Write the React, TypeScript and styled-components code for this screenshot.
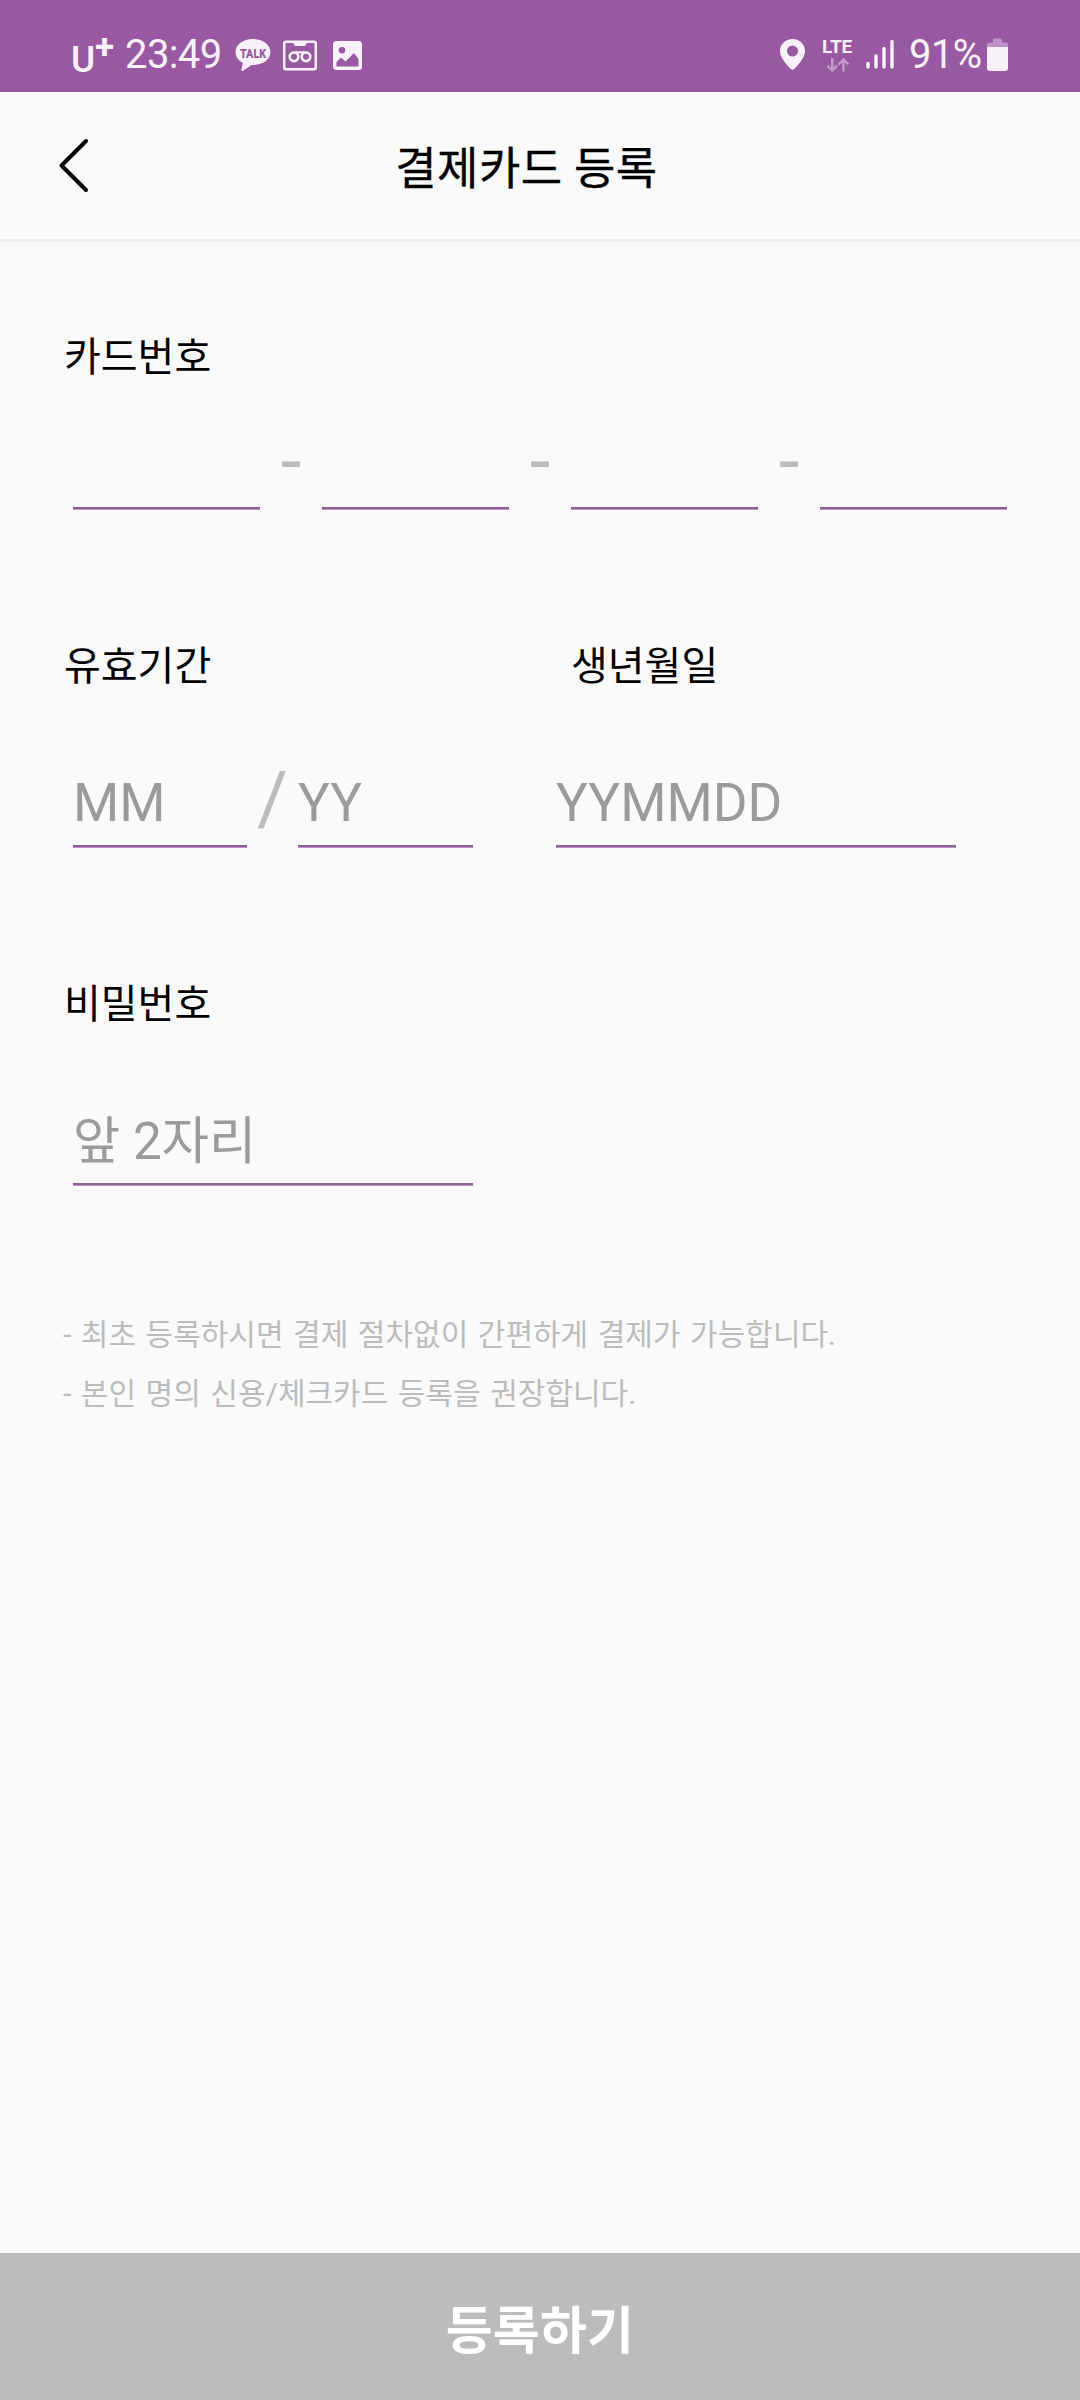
import React from 'react';
import styled, { createGlobalStyle } from 'styled-components';

const tint = '#f8f1f9';

const GlobalStyle = createGlobalStyle`
  * { box-sizing: border-box; }
  body {
    margin: 0;
    background: #fafafa;
    font-family: Roboto, "Noto Sans CJK KR", sans-serif;
  }
`;

const Screen = styled.div`
  width: 1080px;
  height: 2400px;
  display: flex;
  flex-direction: column;
  background: #fafafa;
`;

const StatusBar = styled.header`
  height: 92px;
  flex: none;
  display: flex;
  justify-content: space-between;
  padding: 36px 71px 0 71px;
  background: #9858a2;
  color: ${tint};
`;

const StatusGroup = styled.div`
  display: flex;
  align-items: flex-start;
  height: 38px;
`;

const StatusIcon = styled.svg<{ $gap: number }>`
  display: block;
  flex: none;
  margin-left: ${p => p.$gap}px;
`;

const Carrier = styled.div`
  display: flex;
  width: 54px;
  font-weight: 500;
`;

const CarrierLetter = styled.span`
  width: 24px;
  font-size: 37px;
  line-height: 48px;
`;

const CarrierPlus = styled.span`
  font-size: 35px;
  font-weight: 700;
  line-height: 24px;
`;

const StatusText = styled.span<{ $width: number }>`
  width: ${p => p.$width}px;
  font-size: 40px;
  line-height: 38px;
  letter-spacing: -0.6px;
  white-space: nowrap;
`;

const Network = styled.div`
  display: flex;
  flex-direction: column;
  width: 33px;
  margin-left: 16px;
`;

const NetworkName = styled.span`
  font-size: 19px;
  font-weight: 700;
  line-height: 22px;
  letter-spacing: -0.2px;
`;

const TitleBar = styled.div`
  height: 150px;
  flex: none;
  display: flex;
  align-items: center;
  border-bottom: 3px solid #eeeeee;
  padding: 0 58px;
`;

const BackButton = styled.button`
  flex: none;
  width: 32px;
  height: 56px;
  padding: 0;
  border: 0;
  background: none;
`;

const Title = styled.h1`
  flex: 1;
  margin: 0 59px 0 0;
  padding-top: 9px;
  font-size: 45px;
  font-weight: 400;
  line-height: 60px;
  letter-spacing: 0.4px;
  -webkit-text-stroke: 0.3px #000;
  text-align: center;
  color: #000;
`;

const Form = styled.main`
  flex: 1;
  display: flex;
  flex-direction: column;
  gap: 128px;
  padding: 86px 73px 0;
`;

const FieldSet = styled.section`
  display: flex;
  flex-direction: column;
`;

const LabelRow = styled.div`
  display: flex;
  margin-left: -9px;
`;

const Label = styled.label<{ $width?: number }>`
  width: ${p => (p.$width ? `${p.$width}px` : 'auto')};
  font-size: 40px;
  line-height: 60px;
  color: #000;
`;

const InputRow = styled.div<{ $height: number }>`
  display: flex;
  align-items: flex-end;
  height: ${p => p.$height}px;
`;

const Input = styled.input<{ $width: number; $before?: number; $size?: number }>`
  display: block;
  width: ${p => p.$width}px;
  height: 79px;
  margin: 0 0 0 ${p => p.$before ?? 0}px;
  padding: 0 0 7px;
  border: 0;
  border-bottom: 2px solid #905f98;
  border-radius: 0;
  box-shadow: 0 1px 0 #bd92c5;
  background: none;
  outline: none;
  font-family: inherit;
  font-size: ${p => p.$size ?? 53}px;
  line-height: 70px;
  color: #222;
  &::placeholder {
    color: #9b9b9b;
    opacity: 1;
  }
`;

const Separator = styled.span<{ $width: number; $drop: number }>`
  width: ${p => p.$width}px;
  height: ${p => p.$drop}px;
  font-size: 75px;
  line-height: 80px;
  text-align: center;
  color: #bcbcbc;
`;

const Notes = styled.ul`
  margin: -8px 0 0 -10px;
  padding: 0;
  list-style: none;
`;

const Note = styled.li`
  font-size: 30px;
  line-height: 59px;
  word-spacing: 2.1px;
  color: #bcbcbc;
`;

const SubmitButton = styled.button`
  flex: none;
  height: 147px;
  padding: 10px 0 0;
  border: 0;
  background: #bcbcbc;
  color: #fff;
  font-family: inherit;
  font-size: 51px;
  font-weight: 700;
  line-height: 60px;
  letter-spacing: 0.2px;
`;

const TalkIcon = () => (
  <StatusIcon $gap={10} width="36" height="36" viewBox="0 0 36 36">
    <path d="M18 3C8 3 .5 8.8.5 16c0 4.600 3 8.700 7.400 11l-1.600 7c-.2.900.7 1.400 1.500.9l8.700-6c.5.1 1 .1 1.500.1 10 0 17.500-5.800 17.500-13S28 3 18 3z" fill={tint} />
    <text x="18" y="21.500" textAnchor="middle" textLength="26" lengthAdjust="spacingAndGlyphs" fontFamily="Roboto, sans-serif" fontSize="12" fontWeight="900" fill="#9858a2">TALK</text>
  </StatusIcon>
);

const VoicemailIcon = () => (
  <StatusIcon $gap={11} width="36" height="36" viewBox="0 0 36 36" fill="none" stroke={tint}>
    <rect x="2.200" y="5.700" width="31.600" height="27.600" rx="2" strokeWidth="2.600" />
    <path d="M10 5h16l-3 5h-10z" fill={tint} stroke="none" />
    <circle cx="12" cy="20.800" r="4.300" strokeWidth="2.600" />
    <circle cx="24" cy="20.800" r="4.300" strokeWidth="2.600" />
    <path d="M12 16.300h12" strokeWidth="2" />
  </StatusIcon>
);

const PhotoIcon = () => (
  <StatusIcon $gap={15} width="30" height="36" viewBox="0 0 30 36">
    <path fillRule="evenodd" fill={tint} d="M3.500 5h22a3.500 3.500 0 0 1 3.500 3.500v22a3.500 3.500 0 0 1-3.500 3.500h-22A3.500 3.500 0 0 1 0 30.500v-22A3.500 3.500 0 0 1 3.500 5zM9 11a3.300 3.300 0 1 0 0 6.600A3.300 3.300 0 0 0 9 11zM3.500 26v4.500h22V23l-4.500-6-8.500 8.500-4.500-4z" />
  </StatusIcon>
);

const PinIcon = () => (
  <StatusIcon $gap={0} width="26" height="36" viewBox="0 0 26 36">
    <path fillRule="evenodd" fill={tint} d="M12.500 3C5.600 3 0 8.300 0 15c0 6.300 5.500 12.500 10.800 18 1 1 2.400 1 3.400 0C19.500 27.500 25 21.300 25 15 25 8.300 19.400 3 12.500 3zm0 6.500a5.500 5.500 0 1 1 0 11 5.500 5.500 0 0 1 0-11z" />
  </StatusIcon>
);

const TransferArrows = () => (
  <StatusIcon $gap={4} width="25" height="16" viewBox="0 0 25 16" fill="none" stroke="#c49ccb" strokeWidth="2.400">
    <path d="M6.200 0v12M1.200 7.500l5 5 5-5M17.500 13.500V2M12.500 6.500l5-5 5 5" />
  </StatusIcon>
);

const SignalIcon = () => (
  <StatusIcon $gap={11} width="29" height="36" viewBox="0 0 29 36" stroke={tint} strokeWidth="3.400" strokeLinecap="round">
    <path d="M2 27.500v3.500M10 20v11M18 12.500v18.500M26 5.500v25.500" />
  </StatusIcon>
);

const BatteryIcon = () => (
  <StatusIcon $gap={6} width="22" height="36" viewBox="0 0 22 36">
    <path d="M0 11V8.500A2.500 2.500 0 0 1 2.500 6.500H6V4a1.500 1.500 0 0 1 1.500-1.500h6A1.500 1.500 0 0 1 15 4v2.500h3.500A2.500 2.500 0 0 1 21 8.500V11z" fill="#bf92c7" />
    <path d="M0 11h21v21a3 3 0 0 1-3 3H3a3 3 0 0 1-3-3z" fill={tint} />
  </StatusIcon>
);

export default function App() {
  return (
    <Screen>
      <GlobalStyle />
      <StatusBar>
        <StatusGroup>
          <Carrier>
            <CarrierLetter>U</CarrierLetter>
            <CarrierPlus>+</CarrierPlus>
          </Carrier>
          <StatusText $width={100}>23:49</StatusText>
          <TalkIcon />
          <VoicemailIcon />
          <PhotoIcon />
        </StatusGroup>
        <StatusGroup>
          <PinIcon />
          <Network>
            <NetworkName>LTE</NetworkName>
            <TransferArrows />
          </Network>
          <SignalIcon />
          <StatusIcon $gap={14} width="0" height="36" />
          <StatusText $width={72}>91%</StatusText>
          <BatteryIcon />
        </StatusGroup>
      </StatusBar>

      <TitleBar>
        <BackButton aria-label="뒤로">
          <svg width="32" height="56" viewBox="0 0 32 56" fill="none" stroke="#000" strokeWidth="4" strokeLinecap="round" strokeLinejoin="round">
            <path d="M28 3L3.500 27.500L28 52" />
          </svg>
        </BackButton>
        <Title>결제카드 등록</Title>
      </TitleBar>

      <Form>
        <FieldSet>
          <LabelRow>
            <Label>카드번호</Label>
          </LabelRow>
          <InputRow $height={121}>
            <Input $width={187} />
            <Separator $width={62} $drop={88}>-</Separator>
            <Input $width={187} />
            <Separator $width={62} $drop={88}>-</Separator>
            <Input $width={187} />
            <Separator $width={62} $drop={88}>-</Separator>
            <Input $width={187} />
          </InputRow>
        </FieldSet>

        <FieldSet>
          <LabelRow>
            <Label $width={507}>유효기간</Label>
            <Label>생년월일</Label>
          </LabelRow>
          <InputRow $height={150}>
            <Input $width={174} placeholder="MM" />
            <Separator $width={51} $drop={89}>/</Separator>
            <Input $width={175} placeholder="YY" />
            <Input $width={400} $before={83} placeholder="YYMMDD" />
          </InputRow>
        </FieldSet>

        <FieldSet>
          <LabelRow>
            <Label>비밀번호</Label>
          </LabelRow>
          <InputRow $height={150}>
            <Input $width={400} $size={51.3} placeholder="앞 2자리" />
          </InputRow>
        </FieldSet>

        <Notes>
          <Note>- 최초 등록하시면 결제 절차없이 간편하게 결제가 가능합니다.</Note>
          <Note>- 본인 명의 신용/체크카드 등록을 권장합니다.</Note>
        </Notes>
      </Form>

      <SubmitButton>등록하기</SubmitButton>
    </Screen>
  );
}
